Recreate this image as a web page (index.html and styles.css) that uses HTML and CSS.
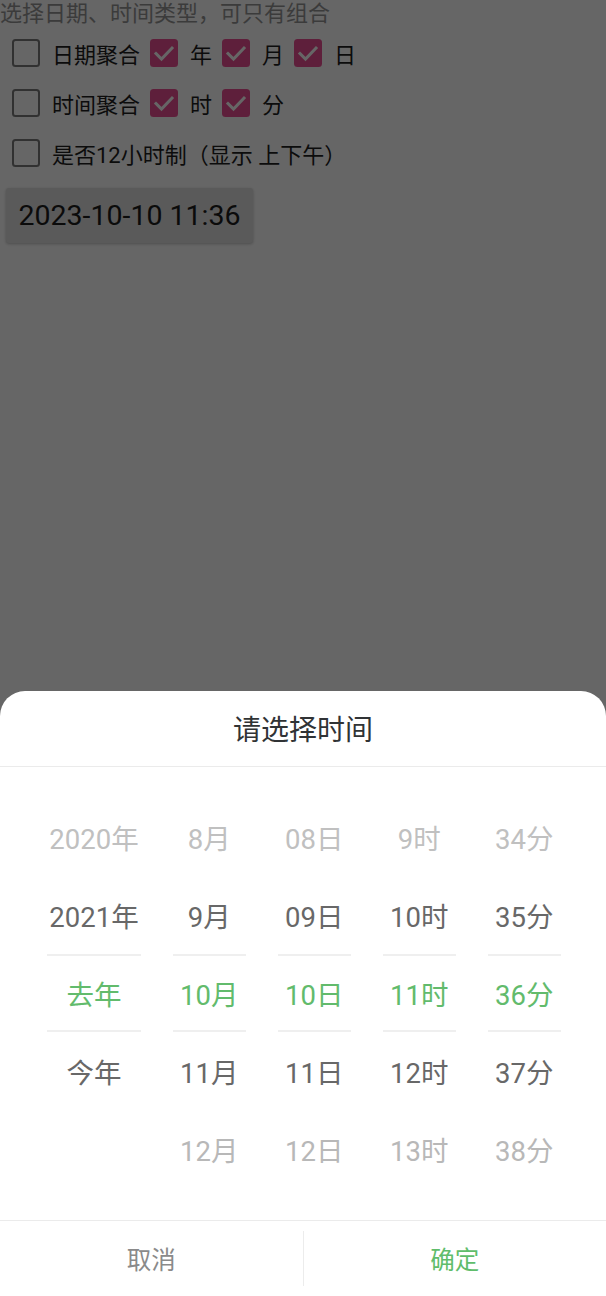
FILE: index.html
```html
<!DOCTYPE html>
<html lang="zh-CN">
<head>
<meta charset="utf-8">
<title>请选择时间</title>
<link rel="stylesheet" href="styles.css">
</head>
<body>
<div class="page">
  <div class="hint">选择日期、时间类型，可只有组合</div>
  <div class="row">
    <label class="cb"><span class="box"></span><span class="lbl">日期聚合</span></label>
    <label class="cb"><span class="box on"><svg viewBox="0 0 28 28"><path d="M6 14.5l5.5 5.5 10.5-11"/></svg></span><span class="lbl">年</span></label>
    <label class="cb"><span class="box on"><svg viewBox="0 0 28 28"><path d="M6 14.5l5.5 5.5 10.5-11"/></svg></span><span class="lbl">月</span></label>
    <label class="cb"><span class="box on"><svg viewBox="0 0 28 28"><path d="M6 14.5l5.5 5.5 10.5-11"/></svg></span><span class="lbl">日</span></label>
  </div>
  <div class="row">
    <label class="cb"><span class="box"></span><span class="lbl">时间聚合</span></label>
    <label class="cb"><span class="box on"><svg viewBox="0 0 28 28"><path d="M6 14.5l5.5 5.5 10.5-11"/></svg></span><span class="lbl">时</span></label>
    <label class="cb"><span class="box on"><svg viewBox="0 0 28 28"><path d="M6 14.5l5.5 5.5 10.5-11"/></svg></span><span class="lbl">分</span></label>
  </div>
  <div class="row">
    <label class="cb"><span class="box"></span><span class="lbl">是否12小时制（显示 上下午）</span></label>
  </div>
  <button class="btn">2023-10-10 11:36</button>
</div>

<div class="mask"></div>

<div class="sheet">
  <div class="sheet-head">请选择时间</div>
  <div class="picker">
    <div class="col">
      <div class="it far">2020年</div>
      <div class="it">2021年</div>
      <div class="it sel">去年</div>
      <div class="it">今年</div>
      <div class="it far"></div>
    </div>
    <div class="col">
      <div class="it far">8月</div>
      <div class="it">9月</div>
      <div class="it sel">10月</div>
      <div class="it">11月</div>
      <div class="it far">12月</div>
    </div>
    <div class="col">
      <div class="it far">08日</div>
      <div class="it">09日</div>
      <div class="it sel">10日</div>
      <div class="it">11日</div>
      <div class="it far">12日</div>
    </div>
    <div class="col">
      <div class="it far">9时</div>
      <div class="it">10时</div>
      <div class="it sel">11时</div>
      <div class="it">12时</div>
      <div class="it far">13时</div>
    </div>
    <div class="col">
      <div class="it far">34分</div>
      <div class="it">35分</div>
      <div class="it sel">36分</div>
      <div class="it">37分</div>
      <div class="it far">38分</div>
    </div>
  </div>
  <div class="sheet-foot">
    <div class="act cancel">取消</div>
    <div class="act ok">确定</div>
  </div>
</div>
</body>
</html>
```

FILE: styles.css
```css
* { box-sizing: border-box; }
html, body {
  margin: 0;
  padding: 0;
  width: 606px;
  height: 1296px;
  overflow: hidden;
  background: #fff;
  font-family: Roboto, "Noto Sans CJK SC", sans-serif;
}

.page { padding: 0; }

.hint {
  font-size: 22px;
  line-height: 28px;
  color: #959595;
  white-space: nowrap;
}

.row {
  height: 50px;
  display: flex;
  align-items: center;
  padding-left: 12px;
  gap: 10px;
}

.cb {
  display: flex;
  align-items: center;
  gap: 12px;
}

.box {
  width: 28px;
  height: 28px;
  border: 2.8px solid #7a7a7a;
  border-radius: 3.5px;
  display: flex;
  align-items: center;
  justify-content: center;
}
.box.on {
  border: none;
  background: #ec4f93;
}
.box svg {
  width: 28px;
  height: 28px;
  fill: none;
  stroke: #fff;
  stroke-width: 3;
  stroke-linecap: square;
}

.lbl {
  font-size: 22px;
  color: #1e1e1e;
  white-space: nowrap;
}

.btn {
  margin: 10px 0 0 6px;
  width: 247px;
  height: 55px;
  border: none;
  border-radius: 3px;
  background: #e0e0e0;
  box-shadow: 0 1px 3px rgba(0,0,0,0.25);
  font-family: Roboto, sans-serif;
  font-size: 28.5px;
  color: #1c1c1c;
  padding: 0;
}

.mask {
  position: fixed;
  inset: 0;
  background: rgba(0,0,0,0.6);
}

.sheet {
  position: fixed;
  left: 0;
  right: 0;
  bottom: 0;
  height: 605px;
  background: #fff;
  border-radius: 25px 25px 0 0;
  display: flex;
  flex-direction: column;
}

.sheet-head {
  height: 76px;
  border-bottom: 1px solid #ebebeb;
  display: flex;
  align-items: center;
  justify-content: center;
  font-size: 28px;
  color: #303335;
  padding-bottom: 2px;
}

.picker {
  height: 454px;
  border-bottom: 1px solid #ebebeb;
  display: grid;
  grid-template-columns: 94px repeat(4, 73.5px);
  column-gap: 31.5px;
  padding: 31px 45px 0 47px;
}

.col {
  display: flex;
  flex-direction: column;
}

.it {
  height: 78px;
  display: flex;
  align-items: center;
  justify-content: center;
  font-size: 27.5px;
  color: #686868;
  white-space: nowrap;
}
.it.far { color: #b8b8b8; }
.it.far:first-child { color: #c0c0c0; }
.it.sel {
  color: #62bb6c;
  border-top: 2px solid #efefef;
  border-bottom: 2px solid #efefef;
}

.sheet-foot {
  flex: 1;
  display: flex;
  align-items: center;
  padding: 10px 0;
}
.act {
  flex: 1;
  height: 100%;
  display: flex;
  align-items: center;
  justify-content: center;
  font-size: 24.5px;
}
.cancel {
  color: #8a8a8a;
  border-right: 1px solid #ececec;
}
.ok { color: #5fbd6b; }
```
